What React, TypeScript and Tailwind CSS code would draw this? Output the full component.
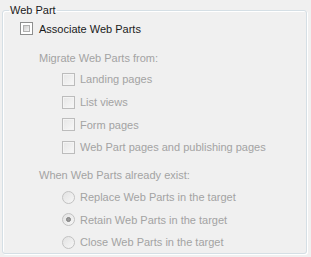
import React from 'react';

const font = { fontFamily: '"Liberation Sans", Arial, sans-serif' };

function Check({ disabled }: { disabled?: boolean }) {
  return (
    <span
      className={
        disabled
          ? 'block w-[13px] h-[13px] shrink-0 border border-[#bcbcbc] bg-gradient-to-br from-[#e6e6e6] to-[#f8f8f8] shadow-[inset_0_0_0_1px_#f4f4f4]'
          : 'block w-[13px] h-[13px] shrink-0 border border-[#8e8f8f] bg-white p-[2px]'
      }
    >
      {!disabled && (
        <span className="block w-full h-full border border-[#b0b0b0] bg-gradient-to-br from-[#cfcfcf] to-[#f6f6f6]" />
      )}
    </span>
  );
}

function Radio({ checked }: { checked?: boolean }) {
  return (
    <span className="flex items-center justify-center w-[13px] h-[13px] shrink-0 rounded-full border border-[#c2c2c2] bg-gradient-to-br from-[#e2e2e2] to-[#f7f7f7]">
      {checked && <span className="block w-[5px] h-[5px] rounded-full bg-[#9a9a9a] border border-[#7f7f7f]" />}
    </span>
  );
}

const sources = ['Landing pages', 'List views', 'Form pages', 'Web Part pages and publishing pages'];
const modes = [
  { label: 'Replace Web Parts in the target', checked: false },
  { label: 'Retain Web Parts in the target', checked: true },
  { label: 'Close Web Parts in the target', checked: false },
];

export default function App() {
  return (
    <div className="w-[311px] h-[257px] bg-[#f0f0f0] text-[11px] leading-[14px] pt-[3px] pl-[2px]" style={font}>
      <fieldset className="w-[305px] h-[251px] rounded-[3px] border border-[#d5dfe5] shadow-[inset_1px_1px_0_#fff,1px_1px_0_#fff]">
        <legend className="ml-[6px] px-[1px] text-[#1b1b1b]">Web Part</legend>

        <div className="h-[23px] flex items-center pl-[17px] gap-[6px] text-[#1b1b1b]">
          <Check />
          <span>Associate Web Parts</span>
        </div>

        <div className="mt-[7px] h-[21px] flex items-center pl-[36px] text-[#a3a3a3]">Migrate Web Parts from:</div>

        <div className="flex flex-col text-[#a3a3a3]">
          {sources.map(s => (
            <div key={s} className="h-[22.7px] flex items-center pl-[59px] gap-[5px]">
              <Check disabled />
              <span>{s}</span>
            </div>
          ))}
        </div>

        <div className="mt-[5px] h-[22px] flex items-center pl-[36px] text-[#a3a3a3]">When Web Parts already exist:</div>

        <div className="flex flex-col text-[#a3a3a3]">
          {modes.map(m => (
            <div key={m.label} className="h-[22.7px] flex items-center pl-[59px] gap-[5px]">
              <Radio checked={m.checked} />
              <span>{m.label}</span>
            </div>
          ))}
        </div>
      </fieldset>
    </div>
  );
}
